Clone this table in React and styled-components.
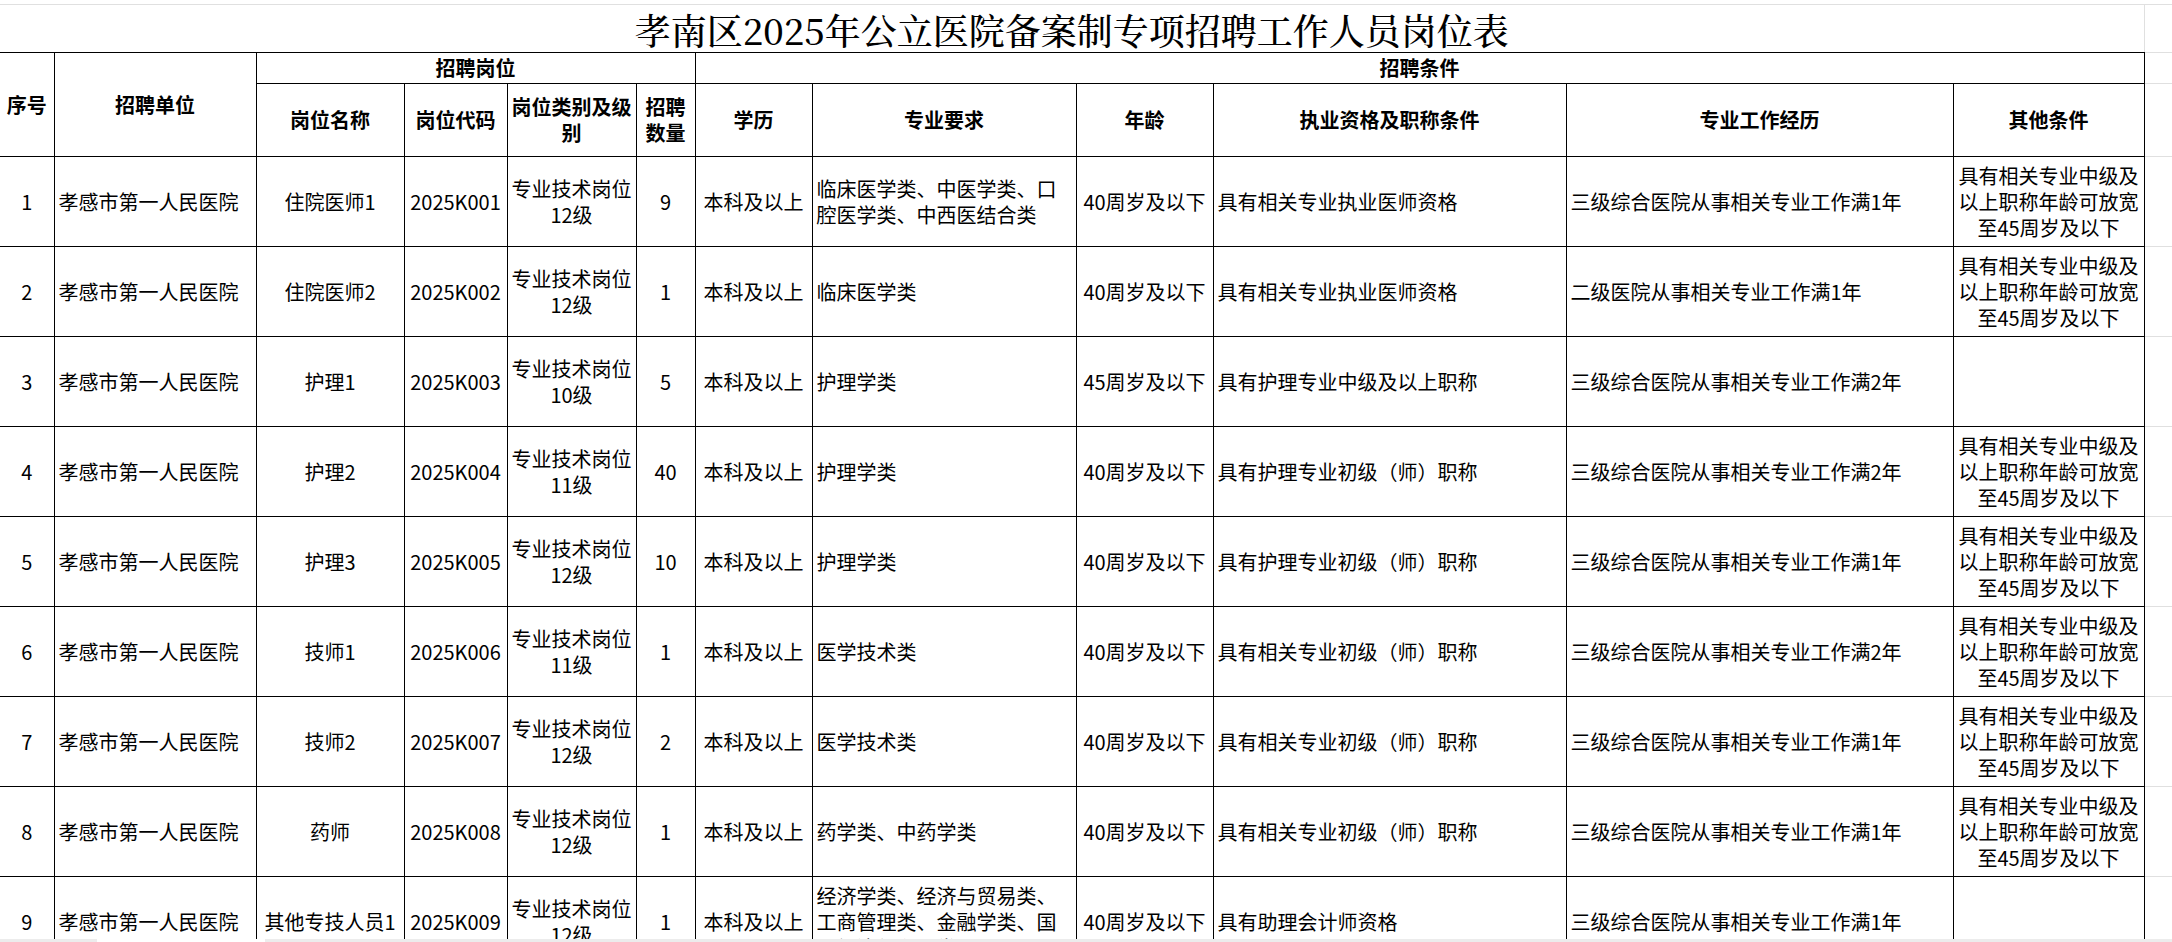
import React from "react";
import styled, { createGlobalStyle } from "styled-components";

const GlobalStyle = createGlobalStyle`
  html, body {
    margin: 0;
    padding: 0;
    background: #fff;
  }
  body {
    overflow: hidden;
    font-family: "Noto Sans CJK SC", "Noto Sans", sans-serif;
    color: #000;
  }
`;

const Sheet = styled.div`
  height: 942px;
  padding-top: 4px;
  box-sizing: border-box;
  overflow: hidden;
`;

const Table = styled.table`
  border-collapse: collapse;
  table-layout: fixed;
  width: 2172px;
`;

const Col = styled.col`
  width: ${(p) => p.$w}px;
`;

const Row = styled.tr`
  height: ${(p) => p.$h}px;
`;

const TitleCell = styled.td`
  padding: 0;
  border-top: 1px solid #e0e0e0;
  border-right: 1px solid #e0e0e0;
  border-bottom: 1px solid #000;
  text-align: center;
  vertical-align: bottom;
  font-family: "Noto Serif CJK SC", "Liberation Serif", "Noto Sans CJK SC", serif;
  font-size: 36px;
  font-weight: 500;
  line-height: 44px;
  white-space: nowrap;
`;

const HeadCell = styled.th`
  padding: 0 3px;
  border: 1px solid #000;
  border-left: ${(p) => (p.$first ? "none" : "1px solid #000")};
  font-size: 20px;
  font-weight: 700;
  line-height: 26px;
  text-align: center;
  vertical-align: middle;
`;

const Cell = styled.td`
  padding: ${(p) => (p.$align === "left" ? "0 6px 0 4px" : "0 3px")};
  border: 1px solid #000;
  border-left: ${(p) => (p.$first ? "none" : "1px solid #000")};
  font-size: 20px;
  font-weight: 400;
  line-height: 26px;
  text-align: ${(p) => p.$align || "center"};
  vertical-align: middle;
`;

const GridFill = styled.td`
  padding: 0;
  border-top: ${(p) => (p.$top ? "1px solid #e0e0e0" : "none")};
  border-bottom: 1px solid #e0e0e0;
`;

const ScrollStrip = styled.div`
  position: fixed;
  left: 0;
  right: 0;
  bottom: 0;
  height: 3px;
  display: flex;
  background: #ececec;
`;

const StripGap = styled.div`
  margin-left: 97px;
  width: 168px;
  background: #fff;
`;

const widths = [54, 202, 148, 103, 129, 59, 117, 264, 137, 353, 387, 191, 28];

const OTHER = "具有相关专业中级及以上职称年龄可放宽至45周岁及以下";
const UNIT = "孝感市第一人民医院";

const rows = [
  ["1", UNIT, "住院医师1", "2025K001", "专业技术岗位12级", "9", "本科及以上", "临床医学类、中医学类、口腔医学类、中西医结合类", "40周岁及以下", "具有相关专业执业医师资格", "三级综合医院从事相关专业工作满1年", OTHER],
  ["2", UNIT, "住院医师2", "2025K002", "专业技术岗位12级", "1", "本科及以上", "临床医学类", "40周岁及以下", "具有相关专业执业医师资格", "二级医院从事相关专业工作满1年", OTHER],
  ["3", UNIT, "护理1", "2025K003", "专业技术岗位10级", "5", "本科及以上", "护理学类", "45周岁及以下", "具有护理专业中级及以上职称", "三级综合医院从事相关专业工作满2年", ""],
  ["4", UNIT, "护理2", "2025K004", "专业技术岗位11级", "40", "本科及以上", "护理学类", "40周岁及以下", "具有护理专业初级（师）职称", "三级综合医院从事相关专业工作满2年", OTHER],
  ["5", UNIT, "护理3", "2025K005", "专业技术岗位12级", "10", "本科及以上", "护理学类", "40周岁及以下", "具有护理专业初级（师）职称", "三级综合医院从事相关专业工作满1年", OTHER],
  ["6", UNIT, "技师1", "2025K006", "专业技术岗位11级", "1", "本科及以上", "医学技术类", "40周岁及以下", "具有相关专业初级（师）职称", "三级综合医院从事相关专业工作满2年", OTHER],
  ["7", UNIT, "技师2", "2025K007", "专业技术岗位12级", "2", "本科及以上", "医学技术类", "40周岁及以下", "具有相关专业初级（师）职称", "三级综合医院从事相关专业工作满1年", OTHER],
  ["8", UNIT, "药师", "2025K008", "专业技术岗位12级", "1", "本科及以上", "药学类、中药学类", "40周岁及以下", "具有相关专业初级（师）职称", "三级综合医院从事相关专业工作满1年", OTHER],
  ["9", UNIT, "其他专技人员1", "2025K009", "专业技术岗位12级", "1", "本科及以上", "经济学类、经济与贸易类、工商管理类、金融学类、国际经济与贸易类", "40周岁及以下", "具有助理会计师资格", "三级综合医院从事相关专业工作满1年", ""],
];

// which columns are left-aligned in the data rows
const leftCols = [1, 7, 9, 10];

const subHeads = ["岗位名称", "岗位代码", "岗位类别及级别", "招聘数量", "学历", "专业要求", "年龄", "执业资格及职称条件", "专业工作经历", "其他条件"];

const App = () => {
  return (
    <>
      <GlobalStyle />
      <Sheet>
        <Table>
          <colgroup>
            {widths.map((w, i) => (
              <Col key={i} $w={w} />
            ))}
          </colgroup>
          <tbody>
            <Row $h={48}>
              <TitleCell colSpan={12}>孝南区2025年公立医院备案制专项招聘工作人员岗位表</TitleCell>
              <GridFill $top />
            </Row>
            <Row $h={31}>
              <HeadCell rowSpan={2} $first>序号</HeadCell>
              <HeadCell rowSpan={2}>招聘单位</HeadCell>
              <HeadCell colSpan={4}>招聘岗位</HeadCell>
              <HeadCell colSpan={6}>招聘条件</HeadCell>
              <GridFill />
            </Row>
            <Row $h={73}>
              {subHeads.map((h) => (
                <HeadCell key={h}>{h}</HeadCell>
              ))}
              <GridFill />
            </Row>
            {rows.map((r) => (
              <Row key={r[0]} $h={90}>
                {r.map((v, i) => (
                  <Cell key={i} $first={i === 0} $align={leftCols.includes(i) ? "left" : "center"}>
                    {v}
                  </Cell>
                ))}
                <GridFill />
              </Row>
            ))}
          </tbody>
        </Table>
      </Sheet>
      <ScrollStrip>
        <StripGap />
      </ScrollStrip>
    </>
  );
};

export default App;
